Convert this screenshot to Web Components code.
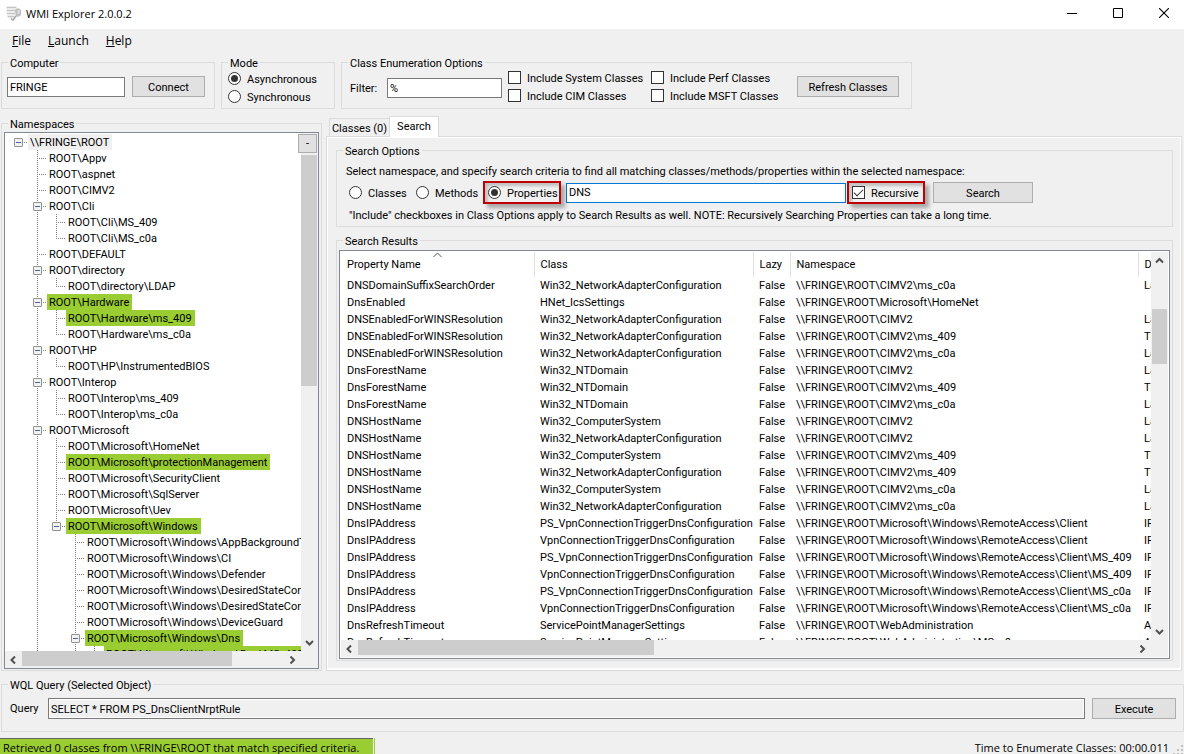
<!DOCTYPE html>
<html lang="en">
<head>
<meta charset="utf-8">
<title>WMI Explorer 2.0.0.2</title>
<style>
  html, body { margin: 0; height: 100%; }
  body { background: #f0f0f0; color: #000; font: 11px/13px Roboto, "Liberation Sans", sans-serif; overflow: hidden; }
</style>
</head>
<body>
<wmi-explorer></wmi-explorer>
<script>
const BASE = `
  *, *::before, *::after { box-sizing: border-box; }
  button, input { font: inherit; color: inherit; margin: 0; border-radius: 0; }
`;
function define(name, css, html) {
  customElements.define(name, class extends HTMLElement {
    connectedCallback() {
      if (this.shadowRoot) return;
      const root = this.attachShadow({ mode: "open" });
      root.innerHTML = `<style>${BASE}${css}</style>${typeof html === "function" ? html(this) : html}`;
    }
  });
}
const esc = s => s.replace(/&/g, "&amp;").replace(/</g, "&lt;");

/* Title bar with the app icon and the window controls */
define("title-bar", `
  :host { display: flex; align-items: center; height: 29px; background: #fff; padding-left: 6px; flex: none;
    font: 11px/16px "Open Sans", sans-serif; }
  .name { flex: 1; margin-left: 4px; padding-bottom: 2px; }
  button { width: 46px; height: 29px; border: 0; background: none; padding: 0 0 3px; display: grid; place-items: center; }
  button:last-child { margin-right: -3px; }
  svg { display: block; }
  .app { margin-bottom: 3px; }
`, `
  <svg class="app" width="16" height="16" viewBox="0 0 16 16" aria-hidden="true">
    <path d="M0 1h10l1 1v9l-2 4-8-2z" fill="#ececec"/>
    <path d="M1 2.500h9M1 5.500h9M1 8.500h8M2 11.500h6" stroke="#c4c4c4"/>
    <path d="M9 5l3-2 3 2v5l-3 2-2-1z" fill="#bcbcbc"/>
    <path d="M12.500 5v4" stroke="#e2e2e2" stroke-width="2"/>
    <path d="M10 11l-3 4-2-1" fill="none" stroke="#a8a8a8" stroke-width="1.500"/>
  </svg>
  <span class="name"><slot></slot></span>
  <button aria-label="Minimize"><svg width="10" height="10"><path d="M0 5.500h10" stroke="#000"/></svg></button>
  <button aria-label="Maximize"><svg width="10" height="10"><path d="M.5.5h9v9h-9z" fill="none" stroke="#000"/></svg></button>
  <button aria-label="Close"><svg width="10" height="10"><path d="M0 0l10 10M10 0L0 10" stroke="#000" stroke-width="1.100"/></svg></button>
`);

define("menu-bar", `
  :host { display: flex; height: 24px; padding-left: 6px; align-items: center; flex: none; font: 12px/16px "Open Sans", sans-serif; }
  button { border: 0; background: none; padding: 0 6px; margin-right: 5px; }
`, `
  <button><u>F</u>ile</button>
  <button><u>L</u>aunch</button>
  <button><u>H</u>elp</button>
`);

/* Titled frame */
define("group-box", `
  :host { display: flex; flex-direction: column; min-width: 0; min-height: 0; }
  fieldset { flex: 1; margin: 0; padding: 0; border: 1px solid #dcdcdc; min-width: 0; min-height: 0;
    display: flex; flex-direction: column; }
  legend { margin-left: 6px; padding: 0 2px; height: 13px; line-height: 15px; }
`, el => `<fieldset><legend>${esc(el.getAttribute("label"))}</legend><slot></slot></fieldset>`);

define("push-button", `
  :host { display: block; height: 21px; flex: none; }
  button { width: 100%; height: 100%; padding: 2px 0 0; border: 1px solid #adadad; background: #e1e1e1; display: block; }
`, `<button><slot></slot></button>`);

define("text-box", `
  :host { display: block; height: 20px; }
  input { display: block; width: 100%; height: 100%; border: 1px solid #7a7a7a; background: #fff; padding: 0 2px; outline: 0; }
  :host([focused]) input { border-color: #0078d7; }
  :host([readonly]) input { background: #f0f0f0; box-shadow: inset 0 0 0 1px #fff; padding-top: 2px; }
`, el => `<input type="text" aria-label="${el.getAttribute("label")}" value="${el.getAttribute("value")}"${el.hasAttribute("readonly") ? " readonly" : ""}>`);

/* Radio button or tick box with its caption */
define("choice-option", `
  :host { display: block; flex: none; }
  label { display: flex; align-items: center; gap: 6px; height: 13px; white-space: nowrap; }
  label span { height: 13px; line-height: 15px; }
  input { appearance: none; width: 13px; height: 13px; border: 1px solid #333; background: #fff; flex: none;
    display: grid; place-items: center; }
  input[type=radio] { border-radius: 50%; }
  input[type=radio]:checked::before { content: ""; width: 7px; height: 7px; border-radius: 50%; background: #333; }
  input[type=checkbox]:checked::before { content: ""; width: 9px; height: 5px; border: solid #333; border-width: 0 0 1px 1px;
    rotate: -45deg; margin-bottom: 3px; }
`, el => `<label><input type="${el.getAttribute("type")}" name="${el.getAttribute("name")}"${el.hasAttribute("checked") ? " checked" : ""}><span><slot></slot></span></label>`);

/* Red frame that draws attention to a control */
define("call-out", `
  :host { display: flex; align-items: center; height: 23px; width: 78px; border: 2px solid #c00000; padding-left: 3px; flex: none;
    box-sizing: border-box; box-shadow: 4px 4px 4px rgba(0,0,0,.3), inset 4px 4px 3px -1px rgba(0,0,0,.2); position: relative; }
`, `<slot></slot>`);

const ARROWS = { up: "M1 5.500L4.500 2 8 5.500", down: "M1 2L4.500 5.500 8 2", left: "M6 .5L2.500 4 6 7.500", right: "M2.500 .5L6 4 2.500 7.500" };
const arrow = d => `<svg width="9" height="8" viewBox="0 0 9 8" aria-hidden="true"><path d="${ARROWS[d]}" fill="none" stroke="#505050" stroke-width="2"/></svg>`;

/* Scroll bar: the before, thumb and after attributes give the shares of its track */
define("scroll-bar", `
  :host { display: flex; background: #f0f0f0; min-width: 0; min-height: 0; }
  :host([vertical]) { flex-direction: column; }
  .end { flex: 0 0 17px; display: grid; place-items: center; }
  :host([vertical]) .end { height: 17px; }
  .thumb { background: #cdcdcd; margin-bottom: 2px; }
  :host([vertical]) .thumb { margin: 0 1px; }
`, el => {
  const v = el.hasAttribute("vertical"), g = n => el.getAttribute(n) || 0;
  return `<span class="end">${arrow(v ? "up" : "left")}</span>
  <span style="flex:${g("before")} 1 0"></span><span class="thumb" style="flex:${g("thumb")} 1 0"></span><span style="flex:${g("after")} 1 0"></span>
  <span class="end">${arrow(v ? "down" : "right")}</span>`;
});

/* Namespace tree. Guides: space = none, | = line, + = tee, L = elbow */
const TREE = [
  ["r", "\\\\FRINGE\\ROOT", "open root"],
  [" +", "ROOT\\Appv"], [" +", "ROOT\\aspnet"], [" +", "ROOT\\CIMV2"],
  [" +", "ROOT\\Cli", "open"], [" |+", "ROOT\\Cli\\MS_409"], [" |L", "ROOT\\Cli\\MS_c0a"],
  [" +", "ROOT\\DEFAULT"],
  [" +", "ROOT\\directory", "open"], [" |L", "ROOT\\directory\\LDAP"],
  [" +", "ROOT\\Hardware", "open hit"], [" |+", "ROOT\\Hardware\\ms_409", "hit"], [" |L", "ROOT\\Hardware\\ms_c0a"],
  [" +", "ROOT\\HP", "open"], [" |L", "ROOT\\HP\\InstrumentedBIOS"],
  [" +", "ROOT\\Interop", "open"], [" |+", "ROOT\\Interop\\ms_409"], [" |L", "ROOT\\Interop\\ms_c0a"],
  [" +", "ROOT\\Microsoft", "open"],
  [" |+", "ROOT\\Microsoft\\HomeNet"], [" |+", "ROOT\\Microsoft\\protectionManagement", "hit"],
  [" |+", "ROOT\\Microsoft\\SecurityClient"], [" |+", "ROOT\\Microsoft\\SqlServer"], [" |+", "ROOT\\Microsoft\\Uev"],
  [" |L", "ROOT\\Microsoft\\Windows", "open hit"],
  [" | +", "ROOT\\Microsoft\\Windows\\AppBackgroundTask"], [" | +", "ROOT\\Microsoft\\Windows\\CI"],
  [" | +", "ROOT\\Microsoft\\Windows\\Defender"], [" | +", "ROOT\\Microsoft\\Windows\\DesiredStateConf"],
  [" | +", "ROOT\\Microsoft\\Windows\\DesiredStateConf"], [" | +", "ROOT\\Microsoft\\Windows\\DeviceGuard"],
  [" | +", "ROOT\\Microsoft\\Windows\\Dns", "open hit"], [" | |L", "ROOT\\Microsoft\\Windows\\Dns\\MS_409", "hit"]
];
const KIND = { " ": "", "|": "v", "+": "v h", "L": "up h", "r": "h" };
define("namespace-tree", `
  :host { display: grid; grid-template-columns: minmax(0, 1fr) 17px; grid-template-rows: minmax(0, 1fr) 17px; flex: 1; min-height: 0;
    margin: 2px 2px 1px; border: 1px solid #828790; background: #fff; }
  .rows { overflow: hidden; margin: 0; padding: 1px 0 0 4px; list-style: none; min-width: 0; }
  li { display: flex; height: 16px; white-space: nowrap; }
  .g { flex: 0 0 19px; position: relative; }
  .g::before, .g::after { position: absolute; }
  .v::before, .up::before { content: ""; left: 9px; top: 0; height: 16px; width: 1px;
    background: repeating-linear-gradient(#808080 0 1px, transparent 1px 2px); }
  .up::before { height: 8px; }
  .h::after { content: ""; left: 9px; top: 8px; width: 9px; height: 1px;
    background: repeating-linear-gradient(90deg, #808080 0 1px, transparent 1px 2px); }
  .box { position: absolute; z-index: 1; left: 5px; top: 4px; width: 9px; height: 9px; padding: 0; border: 1px solid #919191; border-radius: 1px;
    background: linear-gradient(#4b63a7, #4b63a7) 50% 50% / 5px 1px no-repeat, #f2f2f2; }
  .t { padding: 0 3px 0 2px; height: 16px; line-height: 18px; }
  .hit { background: #9acd32; }
  .root { background: #f0f0f0; }
  .side { display: flex; flex-direction: column; background: #f0f0f0; }
  .side button { height: 19px; margin: 1px 1px 2px -3px; padding: 0; border: 1px solid #adadad; background: #e1e1e1; flex: none; }
  .side .thumb { flex: 231 1 0; background: #cdcdcd; margin-right: 1px; }
  .side .rest { flex: 248 1 0; }
  .side .end { height: 17px; display: grid; place-items: center; flex: none; }
  .corner { background: #f0f0f0; }
`, `
  <ul class="rows">${TREE.map(([g, t, f = ""]) => `<li>${[...g].map((c, i) =>
    `<span class="g ${KIND[c]}">${f.includes("open") && i === g.length - 1 ? `<button class="box" aria-label="Collapse"></button>` : ""}</span>`).join("")
    }<span class="t ${f.replace("open", "").trim()}">${t}</span></li>`).join("")}</ul>
  <div class="side"><button>-</button><span class="thumb"></span><span class="rest"></span><span class="end">${arrow("down")}</span></div>
  <scroll-bar before="0" thumb="209" after="52"></scroll-bar>
  <span class="corner"></span>
`);

/* Results list */
const NAC = "Win32_NetworkAdapterConfiguration", CS = "Win32_ComputerSystem", NT = "Win32_NTDomain";
const VPN = "VpnConnectionTriggerDnsConfiguration", R = "\\\\FRINGE\\ROOT\\", RA = "Microsoft\\Windows\\RemoteAccess\\Client";
const RESULTS = [
  ["DNSDomainSuffixSearchOrder", NAC, "CIMV2\\ms_c0a", "La"],
  ["DnsEnabled", "HNet_IcsSettings", "Microsoft\\HomeNet", ""],
  ["DNSEnabledForWINSResolution", NAC, "CIMV2", "La"],
  ["DNSEnabledForWINSResolution", NAC, "CIMV2\\ms_409", "Th"],
  ["DNSEnabledForWINSResolution", NAC, "CIMV2\\ms_c0a", "La"],
  ["DnsForestName", NT, "CIMV2", "La"],
  ["DnsForestName", NT, "CIMV2\\ms_409", "Th"],
  ["DnsForestName", NT, "CIMV2\\ms_c0a", "La"],
  ["DNSHostName", CS, "CIMV2", "La"],
  ["DNSHostName", NAC, "CIMV2", "La"],
  ["DNSHostName", CS, "CIMV2\\ms_409", "Th"],
  ["DNSHostName", NAC, "CIMV2\\ms_409", "Th"],
  ["DNSHostName", CS, "CIMV2\\ms_c0a", "La"],
  ["DNSHostName", NAC, "CIMV2\\ms_c0a", "La"],
  ["DnsIPAddress", "PS_" + VPN, RA, "IP"],
  ["DnsIPAddress", VPN, RA, "IP"],
  ["DnsIPAddress", "PS_" + VPN, RA + "\\MS_409", "IP"],
  ["DnsIPAddress", VPN, RA + "\\MS_409", "IP"],
  ["DnsIPAddress", "PS_" + VPN, RA + "\\MS_c0a", "IP"],
  ["DnsIPAddress", VPN, RA + "\\MS_c0a", "IP"],
  ["DnsRefreshTimeout", "ServicePointManagerSettings", "WebAdministration", "A"],
  ["DnsRefreshTimeout", "ServicePointManagerSettings", "WebAdministration\\MS_c0a", "A"]
];
define("results-list", `
  :host { display: grid; grid-template-columns: minmax(0, 1fr) 17px; grid-template-rows: minmax(0, 1fr) 17px; flex: 1; min-height: 0;
    margin: 3px 2px 1px; border: 1px solid #828790; background: #fff; padding: 1px; }
  .view { overflow: hidden; min-height: 0; }
  table { width: 100%; border-collapse: collapse; table-layout: fixed; }
  th, td { padding: 0 0 0 6px; font-weight: normal; text-align: left; white-space: nowrap; overflow: hidden; height: 17px; }
  th { height: 25px; position: relative; border-right: 1px solid #e0e0e0; }
  th:last-child { border-right: 0; }
  th svg { position: absolute; left: 50%; top: 0; margin-left: -4px; }
  .c1 { width: 193px; } .c2 { width: 219px; } .c3 { width: 37px; } .c4 { width: 348px; }
  .corner { background: #f0f0f0; }
`, `
  <div class="view"><table>
    <colgroup><col class="c1"><col class="c2"><col class="c3"><col class="c4"><col></colgroup>
    <thead><tr><th>Property Name<svg width="9" height="6" viewBox="0 0 9 6" aria-hidden="true"><path d="M.5 5L4.500 1l4 4" fill="none" stroke="#555"/></svg></th><th>Class</th><th>Lazy</th><th>Namespace</th><th>D</th></tr></thead>
    <tbody>${RESULTS.map(([p, c, n, d]) => `<tr><td>${p}</td><td>${c}</td><td>False</td><td>${R + n}</td><td>${d}</td></tr>`).join("")}</tbody>
  </table></div>
  <scroll-bar vertical before="40" thumb="55" after="260"></scroll-bar>
  <scroll-bar before="0" thumb="296" after="480"></scroll-bar>
  <span class="corner"></span>
`);

define("search-page", `
  :host { display: flex; flex-direction: column; flex: 1; min-height: 0; gap: 7px; padding: 6px 7px 7px 8px; }
  .options { display: flex; flex-direction: column; padding: 7px 9px 4px; white-space: nowrap; }
  .options p { margin: 0; height: 14px; line-height: 16px; }
  .options p:last-child { padding-left: 3px; }
  .row { display: flex; align-items: center; height: 23px; margin: 3px 0 4px; padding-left: 3px; }
  .row > choice-option { width: 67px; }
  .row > text-box { flex: 0 1 280px; margin: 0 1px 0 5px; }
  .row > push-button { width: 100px; margin-left: 8px; }
  .results { flex: 1; }
`, `
  <group-box label="Search Options">
    <div class="options">
      <p>Select namespace, and specify search criteria to find all matching classes/methods/properties within the selected namespace:</p>
      <div class="row">
        <choice-option type="radio" name="kind">Classes</choice-option>
        <choice-option type="radio" name="kind">Methods</choice-option>
        <call-out><choice-option type="radio" name="kind" checked>Properties</choice-option></call-out>
        <text-box label="Search text" value="DNS" focused></text-box>
        <call-out><choice-option type="checkbox" name="recursive" checked>Recursive</choice-option></call-out>
        <push-button>Search</push-button>
      </div>
      <p>"Include" checkboxes in Class Options apply to Search Results as well. NOTE: Recursively Searching Properties can take a long time.</p>
    </div>
  </group-box>
  <group-box class="results" label="Search Results"><results-list></results-list></group-box>
`);

define("tab-panel", `
  :host { display: flex; flex-direction: column; min-width: 0; min-height: 0; }
  .tabs { display: flex; align-items: flex-end; height: 20px; padding-left: 3px; flex: none; }
  button { border: 1px solid #dcdcdc; border-bottom: 0; background: #f0f0f0; padding: 2px 0 0; height: 18px; width: 61px; }
  button[aria-selected=true] { background: #fff; height: 21px; width: 50px; padding: 0 0 2px; margin: 0 0 -1px -1px; position: relative; }
  .page { flex: 1; min-height: 0; display: flex; border: 1px solid #dcdcdc; }
  .inner { flex: 1; min-width: 0; display: flex; border: 1px solid #fff; border-bottom-width: 2px; }
`, `
  <div class="tabs" role="tablist"><button role="tab">Classes (0)</button><button role="tab" aria-selected="true">Search</button></div>
  <div class="page"><div class="inner"><slot></slot></div></div>
`);

define("status-bar", `
  :host { display: flex; height: 16px; margin-top: 6px; flex: none; font: 11px/16px "Open Sans", sans-serif; white-space: nowrap; overflow: hidden; }
  .msg { background: #9acd32; border-top: 1px solid #646464; min-width: 373px; padding: 0 4px 0 3px; line-height: 18px; }
  .edge { width: 1px; margin-left: 1px; background: #9acd32; }
  .time { margin-left: auto; padding-right: 4px; line-height: 20px; }
  svg { align-self: flex-end; margin-right: 1px; }
`, `
  <span class="msg">Retrieved 0 classes from \\\\FRINGE\\ROOT that match specified criteria.</span><span class="edge"></span>
  <span class="time">Time to Enumerate Classes: 00:00.011</span>
  <svg width="10" height="10" aria-hidden="true"><path d="M8 1h2v2h-2zM4 5h2v2h-2zM8 5h2v2h-2zM0 9h2v1h-2zM4 9h2v1h-2zM8 9h2v1h-2z" fill="#bfbfbf"/></svg>
`);

define("wmi-explorer", `
  :host { display: flex; flex-direction: column; height: 100vh; }
  .top { display: flex; gap: 6px; margin: 3px 0 0 1px; height: 53px; flex: none; }
  .top .in { display: flex; padding: 0 6px; flex: 1; }
  .computer { width: 214px; } .mode { width: 114px; } .enum { width: 571px; }
  .computer .in { padding: 7px 5px 0; gap: 7px; }
  .computer text-box { width: 118px; margin-top: 1px; }
  .computer push-button { width: 73px; }
  .mode .in { flex-direction: column; gap: 5px; padding-top: 3px; }
  .enum .in { padding: 2px 12px 0 8px; }
  .enum label { width: 37px; padding-top: 11px; }
  .enum text-box { width: 115px; margin: 7px 6px 0 0; }
  .checks { display: grid; grid-template-columns: 143px 140px; grid-auto-rows: 13px; gap: 5px 0; align-content: start; }
  .enum push-button { width: 102px; margin: 5px 0 0 auto; }
  .main { display: grid; grid-template-columns: 321px minmax(0, 1fr); grid-template-rows: minmax(0, 1fr); gap: 4px; margin: 7px 2px 7px 1px; flex: 1; min-height: 0; }
  .main group-box { margin-top: 1px; }
  .query { margin: 0 0 0 1px; flex: none; }
  .query .in { display: flex; align-items: flex-start; height: 40px; padding: 7px 7px 0 8px; }
  .query .in > span { width: 38px; padding-top: 4px; }
  .query text-box { flex: 1; height: 21px; }
  .query push-button { width: 84px; margin-left: 7px; }
`, `
  <title-bar>WMI Explorer 2.0.0.2</title-bar>
  <menu-bar></menu-bar>
  <div class="top">
    <group-box class="computer" label="Computer"><div class="in"><text-box label="Computer" value="FRINGE"></text-box><push-button>Connect</push-button></div></group-box>
    <group-box class="mode" label="Mode"><div class="in">
      <choice-option type="radio" name="mode" checked>Asynchronous</choice-option>
      <choice-option type="radio" name="mode">Synchronous</choice-option></div></group-box>
    <group-box class="enum" label="Class Enumeration Options"><div class="in">
      <label>Filter:</label><text-box label="Filter" value="%"></text-box>
      <div class="checks">
        <choice-option type="checkbox" name="system">Include System Classes</choice-option>
        <choice-option type="checkbox" name="perf">Include Perf Classes</choice-option>
        <choice-option type="checkbox" name="cim">Include CIM Classes</choice-option>
        <choice-option type="checkbox" name="msft">Include MSFT Classes</choice-option>
      </div>
      <push-button>Refresh Classes</push-button></div></group-box>
  </div>
  <div class="main">
    <group-box label="Namespaces"><namespace-tree></namespace-tree></group-box>
    <tab-panel><search-page></search-page></tab-panel>
  </div>
  <group-box class="query" label="WQL Query (Selected Object)"><div class="in">
    <span>Query</span><text-box label="Query" value="SELECT * FROM PS_DnsClientNrptRule" readonly></text-box><push-button>Execute</push-button></div></group-box>
  <status-bar></status-bar>
`);
</script>
</body>
</html>
